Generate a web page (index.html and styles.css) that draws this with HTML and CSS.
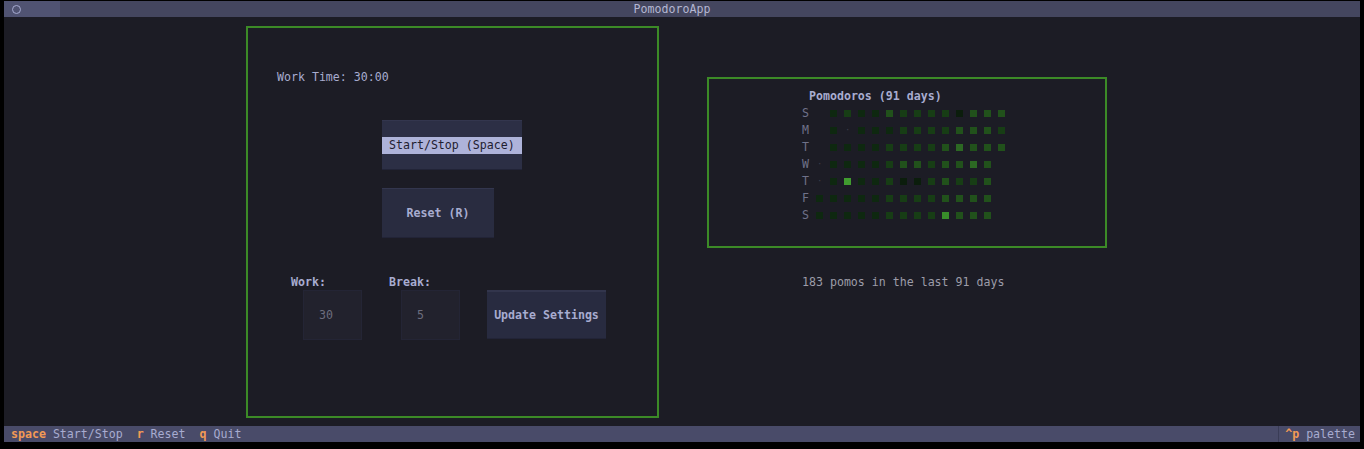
FILE: index.html
```html
<!DOCTYPE html>
<html>
<head>
<meta charset="utf-8">
<title>PomodoroApp</title>
<link rel="stylesheet" href="styles.css">
</head>
<body>
<div class="app">
  <header class="header">
    <div class="header-icon"><span class="circle"></span></div>
    <div class="header-title">PomodoroApp</div>
    <div class="header-spacer"></div>
  </header>
  <main class="main">
    <section class="panel timer-panel">
      <div class="timer">Work Time: 30:00</div>
      <div class="btn btn-start"><span class="btn-label focus">Start/Stop (Space)</span></div>
      <div class="btn btn-reset"><span class="btn-label">Reset (R)</span></div>
      <div class="settings">
        <div class="field">
          <div class="field-label">Work:</div>
          <div class="input">30</div>
        </div>
        <div class="field">
          <div class="field-label">Break:</div>
          <div class="input">5</div>
        </div>
        <div class="btn btn-update"><span class="btn-label">Update Settings</span></div>
      </div>
    </section>
    <section class="stats">
      <div class="panel heat-panel">
        <div class="heat-title">Pomodoros (91 days)</div>
        <div class="heatmap">
          <span class="day">S</span><span></span><i class="sq l1"></i><i class="sq l2"></i><i class="sq l1"></i><i class="sq l1"></i><i class="sq l3"></i><i class="sq l2"></i><i class="sq l2"></i><i class="sq l2"></i><i class="sq l2"></i><i class="sq l0"></i><i class="sq l3"></i><i class="sq l3"></i><i class="sq l3"></i>
          <span class="day">M</span><span></span><i class="sq l1"></i><i class="dot">·</i><i class="sq l1"></i><i class="sq l1"></i><i class="sq l1"></i><i class="sq l2"></i><i class="sq l2"></i><i class="sq l2"></i><i class="sq l2"></i><i class="sq l3"></i><i class="sq l3"></i><i class="sq l3"></i><i class="sq l2"></i>
          <span class="day">T</span><span></span><i class="sq l1"></i><i class="sq l1"></i><i class="sq l1"></i><i class="sq l1"></i><i class="sq l2"></i><i class="sq l2"></i><i class="sq l2"></i><i class="sq l2"></i><i class="sq l3"></i><i class="sq l4"></i><i class="sq l3"></i><i class="sq l3"></i><i class="sq l3"></i>
          <span class="day">W</span><i class="dot">·</i><i class="sq l1"></i><i class="sq l1"></i><i class="sq l1"></i><i class="sq l1"></i><i class="sq l2"></i><i class="sq l3"></i><i class="sq l3"></i><i class="sq l2"></i><i class="sq l3"></i><i class="sq l3"></i><i class="sq l4"></i><i class="sq l3"></i><span></span>
          <span class="day">T</span><i class="dot">·</i><i class="sq l1"></i><i class="sq l5"></i><i class="sq l1"></i><i class="sq l1"></i><i class="sq l2"></i><i class="sq l0"></i><i class="sq l0"></i><i class="sq l2"></i><i class="sq l3"></i><i class="sq l2"></i><i class="sq l2"></i><i class="sq l3"></i><span></span>
          <span class="day">F</span><i class="sq l1"></i><i class="sq l1"></i><i class="sq l1"></i><i class="sq l1"></i><i class="sq l1"></i><i class="sq l2"></i><i class="sq l2"></i><i class="sq l2"></i><i class="sq l2"></i><i class="sq l3"></i><i class="sq l3"></i><i class="sq l3"></i><i class="sq l3"></i><span></span>
          <span class="day">S</span><i class="sq l1"></i><i class="sq l1"></i><i class="sq l1"></i><i class="sq l1"></i><i class="sq l1"></i><i class="sq l2"></i><i class="sq l2"></i><i class="sq l2"></i><i class="sq l2"></i><i class="sq l5b"></i><i class="sq l3"></i><i class="sq l3"></i><i class="sq l3"></i><span></span>
        </div>
      </div>
      <div class="caption">183 pomos in the last 91 days</div>
    </section>
  </main>
  <footer class="footer">
    <div class="keys"><span class="key">space</span> Start/Stop  <span class="key">r</span> Reset  <span class="key">q</span> Quit</div>
    <div class="palette"><span class="key">^p</span> palette</div>
  </footer>
</div>
</body>
</html>
```

FILE: styles.css
```css
* { box-sizing: border-box; }

html, body {
  margin: 0;
  padding: 0;
  background: #000;
}

body {
  font-family: "DejaVu Sans Mono", "Liberation Mono", monospace;
  font-size: 11.6px;
  color: #a8acd0;
}

.app {
  width: 1356px;
  height: 441px;
  margin: 1px 0 0 4px;
  background: #1c1c25;
  display: flex;
  flex-direction: column;
}

/* header */
.header {
  height: 16px;
  flex: none;
  display: flex;
  background: #44465f;
  line-height: 16px;
}

.header-icon {
  width: 56px;
  background: #505372;
  display: flex;
  align-items: center;
  padding-left: 8px;
}

.circle {
  width: 9px;
  height: 9px;
  border: 1.4px solid #a6aad0;
  border-radius: 50%;
}

.header-title {
  flex: 1;
  text-align: center;
  color: #b4b7d2;
}

.header-spacer {
  width: 76px;
}

/* main */
.main {
  flex: 1;
  display: flex;
  align-items: flex-start;
  padding: 9px 0 0 242px;
}

.panel {
  border: 2px solid #3c8a27;
}

.timer-panel {
  width: 413px;
  height: 392px;
  display: flex;
  flex-direction: column;
  align-items: flex-start;
}

.timer {
  margin: 40.5px 0 0 29px;
  line-height: 17px;
}

.btn {
  display: flex;
  align-items: center;
  justify-content: center;
  background: #2c2f45;
  border-top: 1px solid #33364e;
  border-bottom: 1px solid #222437;
  font-weight: bold;
  color: #a8acd0;
}

.btn-label {
  line-height: 17px;
}

.btn-start {
  margin: 34.5px 0 0 134px;
  width: 140px;
  height: 50px;
}

.btn-start .focus {
  display: block;
  width: 100%;
  padding-left: 7px;
  background: #aeb3da;
  color: #1e2030;
  font-weight: normal;
}

.btn-reset {
  margin: 18px 0 0 134px;
  width: 112px;
  height: 50px;
  background: #292c40;
}

.settings {
  display: flex;
  align-items: flex-start;
  gap: 27px;
  margin: 35.5px 0 0 43px;
}

.field {
  display: flex;
  flex-direction: column;
}

.field-label {
  line-height: 16.5px;
  font-weight: bold;
}

.input {
  margin-left: 12px;
  width: 59px;
  height: 50px;
  background: #22222d;
  border: 1px solid #242535;
  color: #6c6d7e;
  line-height: 48px;
  padding-left: 15px;
}

.btn-update {
  margin-top: 16.5px;
  width: 119px;
  height: 49px;
  background: #282b40;
  border-top: 2px solid #32354c;
}

/* stats */
.stats {
  margin: 51px 0 0 48px;
  display: flex;
  flex-direction: column;
}

.heat-panel {
  width: 400px;
  height: 171px;
  padding: 8.5px 0 0 93px;
}

.heat-title {
  padding-left: 7px;
  font-weight: bold;
  line-height: 17px;
  margin-bottom: 1px;
}

.heatmap {
  display: grid;
  grid-template-columns: repeat(15, 14px);
  grid-auto-rows: 16.9px;
  align-items: center;
}

.day {
  color: #6f7189;
  line-height: 17px;
}

.sq {
  display: block;
  width: 7px;
  height: 7px;
}

.dot {
  font-style: normal;
  color: #3b3c4c;
  line-height: 17px;
  font-size: 9px;
  padding-left: 1px;
}

.l0 { background: #0b1d0c; }
.l1 { background: #0e2810; }
.l2 { background: #173d15; }
.l3 { background: #21511b; }
.l4 { background: #2c6823; }
.l5 { background: #409c2f; }
.l5b { background: #388c2a; }

.caption {
  margin: 25.5px 0 0 95px;
  line-height: 17px;
  color: #9c9ca9;
}

/* footer */
.footer {
  height: 16px;
  flex: none;
  display: flex;
  justify-content: space-between;
  background: #494b69;
  line-height: 16px;
  white-space: pre;
}

.keys {
  padding-left: 7px;
}

.key {
  color: #f29a55;
  font-weight: bold;
}

.palette {
  border-left: 1px solid #3a3c56;
  padding: 0 5px 0 6px;
}
```
